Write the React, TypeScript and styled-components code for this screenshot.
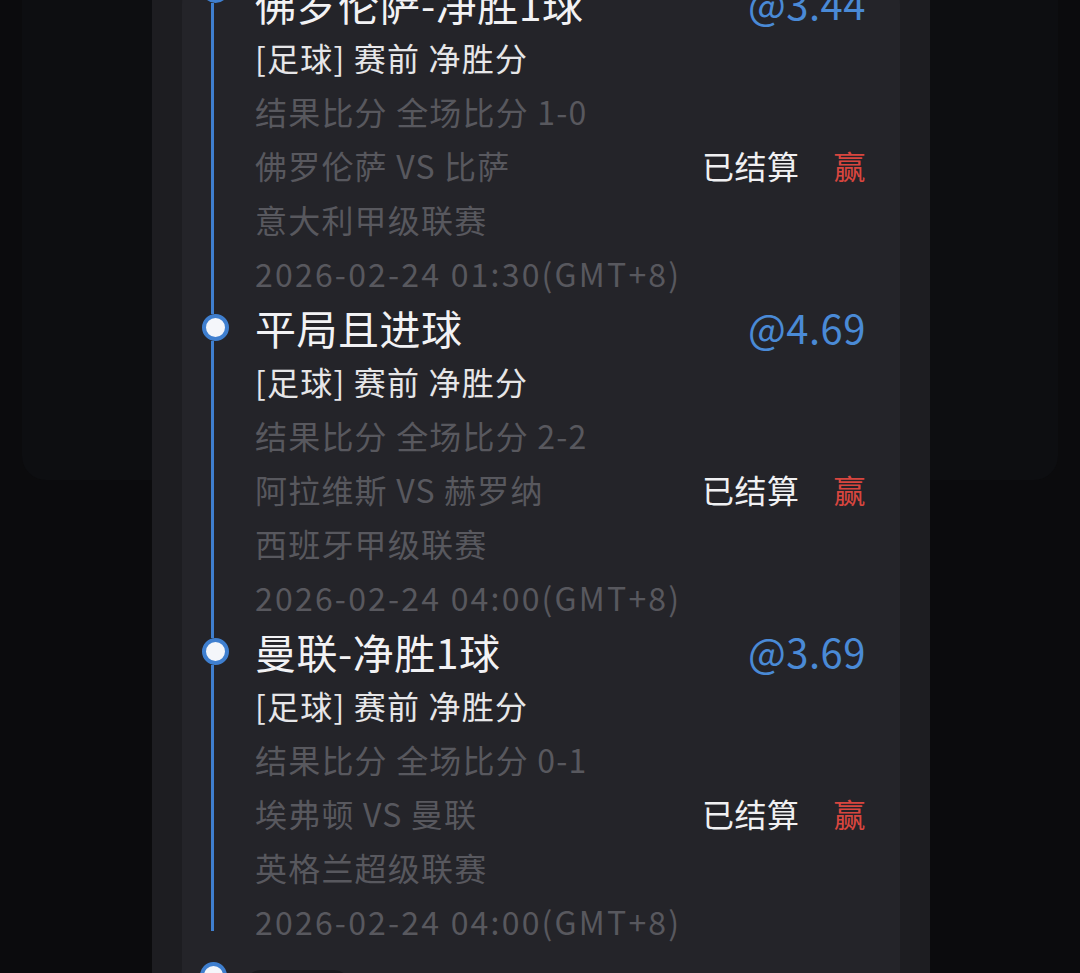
import React from 'react';
import styled, { createGlobalStyle } from 'styled-components';

const GlobalStyle = createGlobalStyle`
  html, body {
    margin: 0;
    padding: 0;
    background: #0b0b0d;
    overflow: hidden;
  }
  * {
    box-sizing: border-box;
  }
`;

const bets = [
  {
    title: '佛罗伦萨-净胜1球',
    odds: '@3.44',
    score: '1-0',
    teams: '佛罗伦萨 VS 比萨',
    league: '意大利甲级联赛',
    time: '2026-02-24 01:30(GMT+8)',
  },
  {
    title: '平局且进球',
    odds: '@4.69',
    score: '2-2',
    teams: '阿拉维斯 VS 赫罗纳',
    league: '西班牙甲级联赛',
    time: '2026-02-24 04:00(GMT+8)',
  },
  {
    title: '曼联-净胜1球',
    odds: '@3.69',
    score: '0-1',
    teams: '埃弗顿 VS 曼联',
    league: '英格兰超级联赛',
    time: '2026-02-24 04:00(GMT+8)',
  },
];

function BetItem({ bet, first, cut }) {
  return (
    <ItemRow>
      <Rail>
        <Segment hidden={first} />
        <Dot />
        <Segment grow cut={cut} />
      </Rail>
      <Body>
        <Head>
          <Title>{bet.title}</Title>
          <Odds>{bet.odds}</Odds>
        </Head>
        <Sub>[足球] 赛前 净胜分</Sub>
        <Muted>结果比分 全场比分 {bet.score}</Muted>
        <Head>
          <Muted>{bet.teams}</Muted>
          <Status>
            已结算
            <Win>赢</Win>
          </Status>
        </Head>
        <Muted>{bet.league}</Muted>
        <Muted date>{bet.time}</Muted>
      </Body>
    </ItemRow>
  );
}

export default function App() {
  return (
    <>
      <GlobalStyle />
      <Page>
        <Backdrop />
        <Sheet>
          <Card>
            {/* list is scrolled: first item sits partly above the viewport */}
            <List>
              {bets.map((bet, i) => (
                <BetItem key={i} bet={bet} first={i === 0} cut={i === bets.length - 1} />
              ))}
              <NextRow>
                <Rail>
                  <Dot small />
                </Rail>
                <Pill />
              </NextRow>
            </List>
          </Card>
        </Sheet>
      </Page>
    </>
  );
}

const Page = styled.div`
  position: relative;
  height: 973px;
  overflow: hidden;
  font-family: 'Noto Sans CJK SC', 'Noto Sans', sans-serif;
`;

const Backdrop = styled.div`
  margin: 0 22px;
  height: 480px;
  background: #0d0e11;
  border-radius: 0 0 24px 24px;
`;

const Sheet = styled.div`
  position: absolute;
  top: 0;
  bottom: 0;
  left: 152px;
  width: 778px;
  padding: 0 30px;
  background: #1d1d21;
`;

const Card = styled.div`
  margin-top: -8px;
  min-height: 1000px;
  background: #242429;
  border-radius: 28px 28px 0 0;
`;

const List = styled.div`
  margin-top: -24px;
  display: flex;
  flex-direction: column;
`;

const ItemRow = styled.div`
  display: grid;
  grid-template-columns: 73px 1fr;
  padding-right: 34px;
`;

const Rail = styled.div`
  display: flex;
  flex-direction: column;
  align-items: flex-start;
`;

const Segment = styled.div<{ hidden?: boolean; grow?: boolean; cut?: boolean }>`
  width: 3px;
  margin-left: 29px;
  height: ${(p) => (p.grow ? 'auto' : '14px')};
  flex: ${(p) => (p.grow ? 1 : 'none')};
  margin-bottom: ${(p) => (p.cut ? '17px' : '0')};
  background: ${(p) => (p.hidden ? 'transparent' : '#3f7fcf')};
`;

const Dot = styled.div<{ small?: boolean }>`
  width: 27px;
  height: 27px;
  margin-left: ${(p) => (p.small ? '18px' : '20px')};
  margin-top: ${(p) => (p.small ? '14px' : '0')};
  border-radius: 50%;
  background: #f4f6fa;
  border: 4px solid #3f7fcf;
  flex: none;
`;

const Body = styled.div`
  display: flex;
  flex-direction: column;
  min-width: 0;
`;

const Head = styled.div`
  display: flex;
  justify-content: space-between;
  align-items: center;
  height: 54px;
`;

const Title = styled.div`
  font-size: 41px;
  line-height: 54px;
  color: #f2f2f4;
  letter-spacing: 0.5px;
`;

const Odds = styled.div`
  font-size: 40px;
  line-height: 54px;
  color: #4a8ad6;
  letter-spacing: 0.5px;
`;

const Sub = styled.div`
  font-size: 32px;
  line-height: 54px;
  color: #e6e6e8;
  letter-spacing: 1.2px;
`;

const Muted = styled.div<{ date?: boolean }>`
  font-size: 32px;
  line-height: 54px;
  color: #58585e;
  letter-spacing: ${(p) => (p.date ? '2.2px' : '1.2px')};
  white-space: nowrap;
`;

const Status = styled.div`
  display: flex;
  gap: 34px;
  font-size: 32px;
  line-height: 54px;
  color: #f0f0f2;
  letter-spacing: 0.5px;
`;

const Win = styled.span`
  color: #d8463f;
`;

const NextRow = styled.div`
  display: grid;
  grid-template-columns: 63px 1fr;
  align-items: start;
`;

const Pill = styled.div`
  margin-top: 22px;
  width: 105px;
  height: 40px;
  border-radius: 16px;
  background: #1a1a1e;
`;
